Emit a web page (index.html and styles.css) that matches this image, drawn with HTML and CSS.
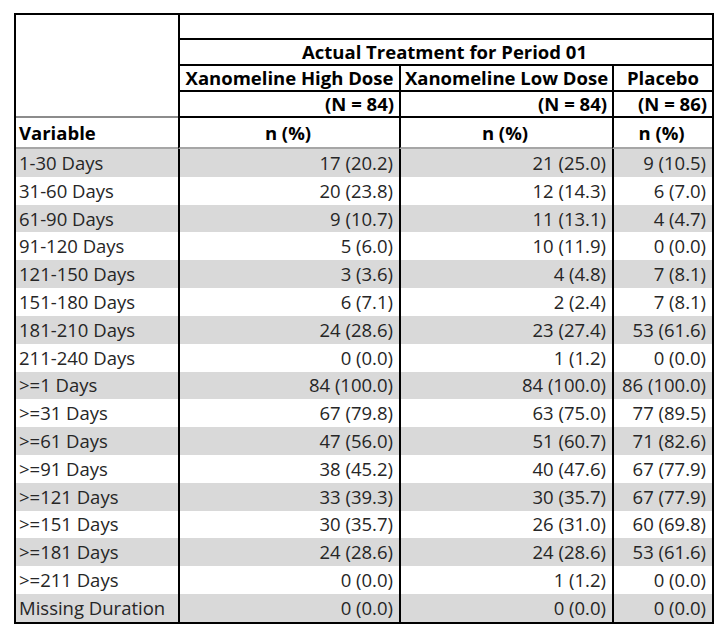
FILE: index.html
```html
<!DOCTYPE html>
<html>
<head>
<meta charset="utf-8">
<link rel="stylesheet" href="styles.css">
</head>
<body>
<table class="tbl">
  <colgroup>
    <col class="c1"><col class="c2"><col class="c3"><col class="c4">
  </colgroup>
  <thead>
    <tr class="r1">
      <td class="corner" rowspan="4"></td>
      <td class="blank" colspan="3"></td>
    </tr>
    <tr class="r2">
      <th class="span" colspan="3">Actual Treatment for Period 01</th>
    </tr>
    <tr class="r3">
      <th class="grp">Xanomeline High Dose</th>
      <th class="grp">Xanomeline Low Dose</th>
      <th class="grp">Placebo</th>
    </tr>
    <tr class="r4">
      <th class="nn">(N = 84)</th>
      <th class="nn">(N = 84)</th>
      <th class="nn">(N = 86)</th>
    </tr>
    <tr class="r5">
      <th class="var">Variable</th>
      <th class="stat">n (%)</th>
      <th class="stat">n (%)</th>
      <th class="stat">n (%)</th>
    </tr>
  </thead>
  <tbody>
    <tr class="odd"><td class="lbl">1-30 Days</td><td class="v">17 (20.2)</td><td class="v">21 (25.0)</td><td class="v">9 (10.5)</td></tr>
    <tr><td class="lbl">31-60 Days</td><td class="v">20 (23.8)</td><td class="v">12 (14.3)</td><td class="v">6 (7.0)</td></tr>
    <tr class="odd"><td class="lbl">61-90 Days</td><td class="v">9 (10.7)</td><td class="v">11 (13.1)</td><td class="v">4 (4.7)</td></tr>
    <tr><td class="lbl">91-120 Days</td><td class="v">5 (6.0)</td><td class="v">10 (11.9)</td><td class="v">0 (0.0)</td></tr>
    <tr class="odd"><td class="lbl">121-150 Days</td><td class="v">3 (3.6)</td><td class="v">4 (4.8)</td><td class="v">7 (8.1)</td></tr>
    <tr><td class="lbl">151-180 Days</td><td class="v">6 (7.1)</td><td class="v">2 (2.4)</td><td class="v">7 (8.1)</td></tr>
    <tr class="odd"><td class="lbl">181-210 Days</td><td class="v">24 (28.6)</td><td class="v">23 (27.4)</td><td class="v">53 (61.6)</td></tr>
    <tr><td class="lbl">211-240 Days</td><td class="v">0 (0.0)</td><td class="v">1 (1.2)</td><td class="v">0 (0.0)</td></tr>
    <tr class="odd"><td class="lbl">&gt;=1 Days</td><td class="v">84 (100.0)</td><td class="v">84 (100.0)</td><td class="v">86 (100.0)</td></tr>
    <tr><td class="lbl">&gt;=31 Days</td><td class="v">67 (79.8)</td><td class="v">63 (75.0)</td><td class="v">77 (89.5)</td></tr>
    <tr class="odd"><td class="lbl">&gt;=61 Days</td><td class="v">47 (56.0)</td><td class="v">51 (60.7)</td><td class="v">71 (82.6)</td></tr>
    <tr><td class="lbl">&gt;=91 Days</td><td class="v">38 (45.2)</td><td class="v">40 (47.6)</td><td class="v">67 (77.9)</td></tr>
    <tr class="odd"><td class="lbl">&gt;=121 Days</td><td class="v">33 (39.3)</td><td class="v">30 (35.7)</td><td class="v">67 (77.9)</td></tr>
    <tr><td class="lbl">&gt;=151 Days</td><td class="v">30 (35.7)</td><td class="v">26 (31.0)</td><td class="v">60 (69.8)</td></tr>
    <tr class="odd"><td class="lbl">&gt;=181 Days</td><td class="v">24 (28.6)</td><td class="v">24 (28.6)</td><td class="v">53 (61.6)</td></tr>
    <tr><td class="lbl">&gt;=211 Days</td><td class="v">0 (0.0)</td><td class="v">1 (1.2)</td><td class="v">0 (0.0)</td></tr>
    <tr class="odd"><td class="lbl">Missing Duration</td><td class="v">0 (0.0)</td><td class="v">0 (0.0)</td><td class="v">0 (0.0)</td></tr>
  </tbody>
</table>
</body>
</html>
```

FILE: styles.css
```css
html, body {
  margin: 0;
  padding: 0;
  background: #ffffff;
}
body {
  padding: 13px 0 0 14px;
  font-family: "Open Sans", "Noto Sans", sans-serif;
  font-size: 18.5px;
  color: #262626;
}
.tbl {
  box-sizing: border-box;
  border-collapse: separate;
  border-spacing: 0;
  table-layout: fixed;
  width: 700px;
  border: 2px solid #000;
}
.c1 { width: 162px; }
.c2 { width: 221px; }
.c3 { width: 213px; }
.c4 { width: 100px; }

.tbl th, .tbl td {
  box-sizing: border-box;
  padding: 0 6px 0 3px;
  white-space: nowrap;
  overflow: hidden;
  border: 0;
  vertical-align: middle;
  line-height: 22px;
}
.tbl th {
  font-weight: 700;
  font-size: 18.5px;
  color: #000;
}

/* header rows */
.tbl .r1 td { height: 25px; }
.tbl .r2 th, .tbl .r3 th, .tbl .r4 th { height: 26px; }
.tbl .blank, .tbl .span, .tbl .grp, .tbl .nn {
  border-left: 2px solid #000;
  border-bottom: 2px solid #000;
}
.tbl .corner {
  border-bottom: 2px solid #8c8c8c;
}
.tbl .span { text-align: center; }
.tbl .grp { text-align: center; padding: 0 1px; }
.tbl .nn { text-align: right; padding-right: 5px; }

.tbl .r5 th {
  height: 31px;
  border-bottom: 2px solid #a6a6a6;
}
.tbl .r5 .stat { border-left: 2px solid #000; text-align: center; }
.tbl .r5 .var { text-align: left; }

/* body rows */
.tbl tbody td { height: 27.82px; }
.tbl tbody td.v { border-left: 2px solid #000; text-align: right; }
.tbl tbody tr.odd td { background: #d9d9d9; }
.tbl .lbl { text-align: left; }
```
